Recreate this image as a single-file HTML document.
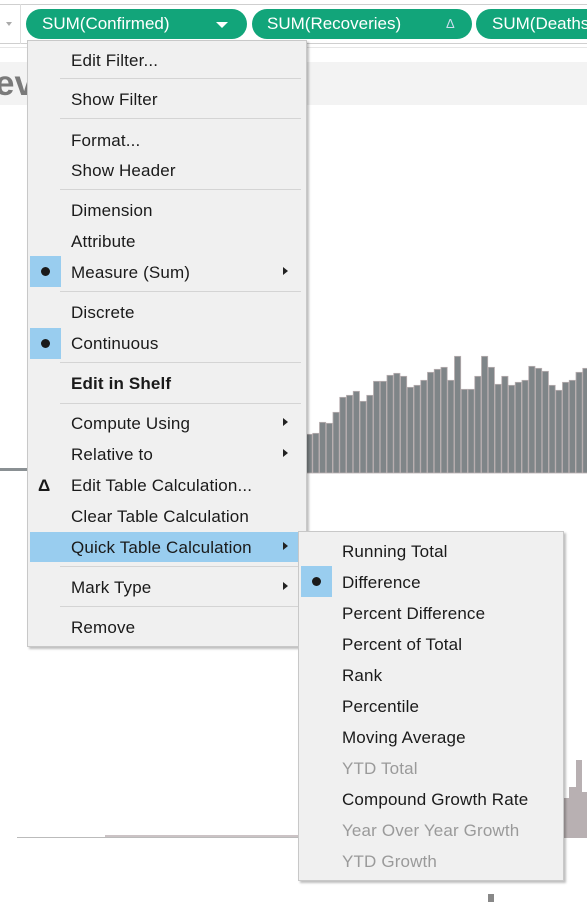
<!DOCTYPE html>
<html><head><style>
body{margin:0;width:587px;height:902px;background:#fff;position:relative;overflow:hidden;font-family:"Segoe UI","Liberation Sans",sans-serif;}
.a{position:absolute}
.pill{position:absolute;top:9px;height:30px;background:#12a57a;border-radius:15px;color:#fff;font-size:17px;line-height:30px;white-space:nowrap;overflow:hidden}
.menu{position:absolute;background:#f0f0f0;border:1px solid #c8c8c8;box-shadow:2px 2px 2px rgba(0,0,0,.25)}
.it{position:absolute;font-size:17px;letter-spacing:0.15px;color:#1a1a1a;white-space:nowrap;line-height:20px;margin-top:1px}
.sep{position:absolute;height:1px;background:#d4d4d4}
.bx{position:absolute;background:#99cdef;width:31px;height:31px}
.bx:after{content:"";position:absolute;left:11px;top:11px;width:9px;height:9px;border-radius:50%;background:#1a1a1a}
.tri{position:absolute;width:0;height:0;border-top:4px solid transparent;border-bottom:4px solid transparent;border-left:5px solid #222}
.dis{color:#9a9a9a}
</style></head><body>
<div class="a" style="left:0;top:4px;width:587px;height:1px;background:#cfcfcf"></div>
<div class="a" style="left:0;top:43px;width:587px;height:1px;background:#cfcfcf"></div>
<div class="a" style="left:0;top:47px;width:587px;height:1px;background:#e6e6e6"></div>
<div class="a" style="left:20px;top:4px;width:1px;height:40px;background:#ddd"></div>
<div class="a" style="left:6px;top:22px;border-left:3px solid transparent;border-right:3px solid transparent;border-top:4px solid #aaa"></div>
<div class="a" style="left:0;top:62px;width:587px;height:43px;background:#f3f3f3"></div>
<div class="a" style="left:-5px;top:62px;font-size:35px;color:#7a7a7a;font-weight:bold;line-height:44px">ev</div>
<div class="pill" style="left:26px;width:221px"><span style="margin-left:16px">SUM(Confirmed)</span>
<div class="a" style="left:190px;top:13px;border-left:6px solid transparent;border-right:6px solid transparent;border-top:6px solid #fff"></div></div>
<div class="pill" style="left:252px;width:220px"><span style="margin-left:15px">SUM(Recoveries)</span>
<div class="a" style="left:194px;top:0;font-size:13px;color:#cde">&#916;</div></div>
<div class="pill" style="left:476px;width:140px"><span style="margin-left:16px">SUM(Deaths)</span></div>

<svg class="a" style="left:0;top:340px" width="587" height="140" id="bars"></svg>
<div class="a" style="left:0;top:468px;width:28px;height:3px;background:#8a9093"></div>
<div class="a" style="left:17px;top:837px;width:285px;height:1px;background:#bbb"></div>
<div class="a" style="left:105px;top:835px;width:200px;height:2px;background:#cbc3c5"></div>
<div class="a" style="left:563px;top:798px;width:7px;height:40px;background:#b8b0b2"></div>
<div class="a" style="left:569px;top:787px;width:7px;height:51px;background:#b8b0b2"></div>
<div class="a" style="left:576px;top:760px;width:6px;height:78px;background:#b8b0b2"></div>
<div class="a" style="left:582px;top:792px;width:5px;height:46px;background:#b8b0b2"></div>
<div class="a" style="left:488px;top:894px;width:6px;height:8px;background:#888"></div>

<div class="menu" style="left:27px;top:40px;width:278px;height:605px"></div>
<div class="a" style="left:27px;top:40px;width:280px;height:610px">
<div class="it" style="left:44px;top:10px">Edit Filter...</div>
<div class="sep" style="left:33px;top:38px;width:241px"></div>
<div class="it" style="left:44px;top:49px">Show Filter</div>
<div class="sep" style="left:33px;top:78px;width:241px"></div>
<div class="it" style="left:44px;top:90px">Format...</div>
<div class="it" style="left:44px;top:120px">Show Header</div>
<div class="sep" style="left:33px;top:149px;width:241px"></div>
<div class="it" style="left:44px;top:160px">Dimension</div>
<div class="it" style="left:44px;top:191px">Attribute</div>
<div class="bx" style="left:3px;top:216px"></div>
<div class="it" style="left:44px;top:222px">Measure (Sum)</div>
<div class="tri" style="left:256px;top:227px"></div>
<div class="sep" style="left:33px;top:251px;width:241px"></div>
<div class="it" style="left:44px;top:262px">Discrete</div>
<div class="bx" style="left:3px;top:288px"></div>
<div class="it" style="left:44px;top:293px">Continuous</div>
<div class="sep" style="left:33px;top:322px;width:241px"></div>
<div class="it" style="left:44px;top:333px;font-weight:bold">Edit in Shelf</div>
<div class="sep" style="left:33px;top:363px;width:241px"></div>
<div class="it" style="left:44px;top:373px">Compute Using</div>
<div class="tri" style="left:256px;top:378px"></div>
<div class="it" style="left:44px;top:404px">Relative to</div>
<div class="tri" style="left:256px;top:409px"></div>
<div class="it" style="left:11px;top:435px;font-weight:bold">&#916;</div>
<div class="it" style="left:44px;top:435px">Edit Table Calculation...</div>
<div class="it" style="left:44px;top:466px">Clear Table Calculation</div>
<div class="a" style="left:3px;top:492px;width:268px;height:30px;background:#99cdef"></div>
<div class="it" style="left:44px;top:497px">Quick Table Calculation</div>
<div class="tri" style="left:256px;top:502px"></div>
<div class="sep" style="left:33px;top:526px;width:241px"></div>
<div class="it" style="left:44px;top:537px">Mark Type</div>
<div class="tri" style="left:256px;top:542px"></div>
<div class="sep" style="left:33px;top:566px;width:241px"></div>
<div class="it" style="left:44px;top:577px">Remove</div>
</div>

<div class="menu" style="left:298px;top:531px;width:264px;height:348px"></div>
<div class="a" style="left:298px;top:531px;width:266px;height:350px">
<div class="it" style="left:44px;top:10px">Running Total</div>
<div class="bx" style="left:3px;top:35px"></div>
<div class="it" style="left:44px;top:41px">Difference</div>
<div class="it" style="left:44px;top:72px">Percent Difference</div>
<div class="it" style="left:44px;top:103px">Percent of Total</div>
<div class="it" style="left:44px;top:134px">Rank</div>
<div class="it" style="left:44px;top:165px">Percentile</div>
<div class="it" style="left:44px;top:196px">Moving Average</div>
<div class="it dis" style="left:44px;top:227px">YTD Total</div>
<div class="it" style="left:44px;top:258px">Compound Growth Rate</div>
<div class="it dis" style="left:44px;top:289px">Year Over Year Growth</div>
<div class="it dis" style="left:44px;top:320px">YTD Growth</div>
</div>
<script>
var t=[283,280,247,250,217,172,166,154,184,166,124,124,106,100,109,142,136,121,97,88,82,121,49,148,148,109,49,82,133,109,136,127,121,79,85,94,136,151,127,121,97,85];
var s='';for(var i=0;i<t.length;i++){var x=306+i*6.75,y=t[i]/3;s+='<rect x="'+x+'" y="'+y+'" width="6.2" height="'+(133-y)+'" fill="#7f8588" stroke="#b8aeb0" stroke-width="0.8"/>';}
document.getElementById('bars').innerHTML=s;
</script>
</body></html>
